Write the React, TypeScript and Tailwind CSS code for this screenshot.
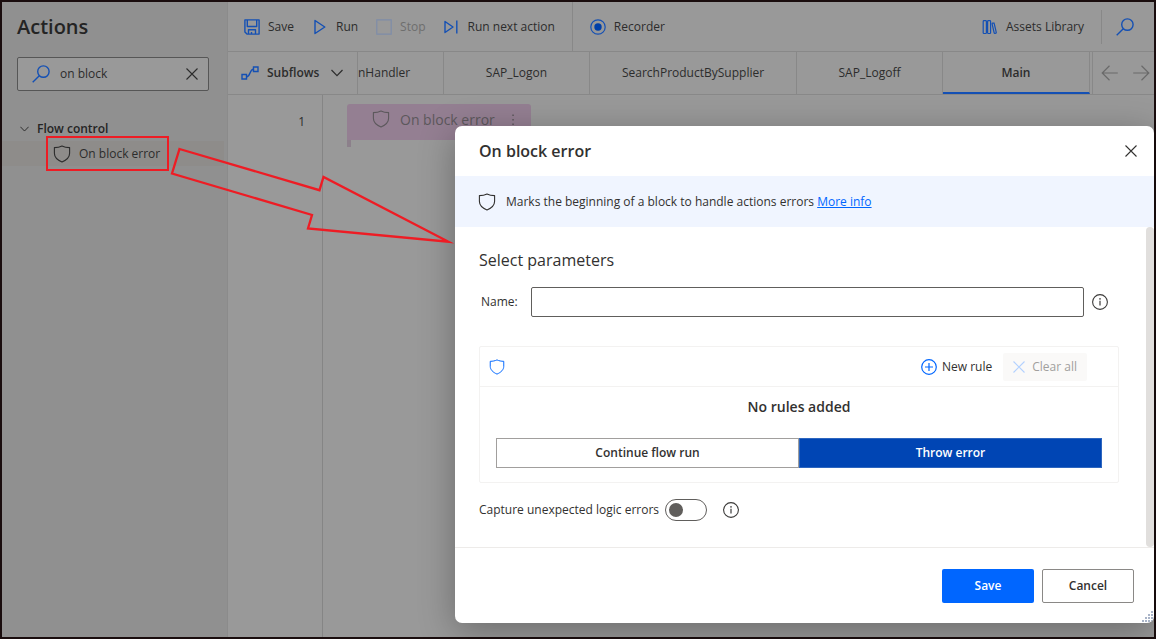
import React, { useState } from "react";

type IconProps = { className?: string };

const Shield = ({ className = "" }: IconProps) => (
  <svg viewBox="0 0 18 18" className={`shrink-0 ${className}`} fill="none" stroke="currentColor" strokeWidth="1.1" strokeLinejoin="round">
    <path d="M9 1C11.2 2.1 13.8 2.600 16.600 2.600V8.200C16.600 12 13.600 15 9 17C4.400 15 1.400 12 1.400 8.200V2.600C4.200 2.600 6.800 2.100 9 1Z" />
  </svg>
);

const Search = ({ className = "" }: IconProps) => (
  <svg viewBox="0 0 18 18" className={`shrink-0 ${className}`} fill="none" stroke="currentColor" strokeWidth="1.400">
    <circle cx="11.400" cy="6.600" r="5.700" />
    <path d="M7.300 10.700L0.700 17.300" />
  </svg>
);

const Cross = ({ className = "" }: IconProps) => (
  <svg viewBox="0 0 12 12" className={`shrink-0 ${className}`} fill="none" stroke="currentColor" strokeWidth="1.100">
    <path d="M0.500 0.500L11.500 11.500M11.500 0.500L0.500 11.500" />
  </svg>
);

const Chevron = ({ className = "" }: IconProps) => (
  <svg viewBox="0 0 12 8" className={`shrink-0 ${className}`} fill="none" stroke="currentColor" strokeWidth="1.200">
    <path d="M0.500 1L6 6.700L11.500 1" />
  </svg>
);

const Info = () => (
  <svg viewBox="0 0 16 16" className="size-4 shrink-0 text-[#3b3a39]" fill="none" stroke="currentColor">
    <circle cx="8" cy="8" r="7.400" strokeWidth="1.100" />
    <path d="M8 6.800V11.600" strokeWidth="1.200" />
    <circle cx="8" cy="4.900" r="0.800" fill="currentColor" stroke="none" />
  </svg>
);

const SaveIcon = () => (
  <svg viewBox="0 0 16 16" className="size-4 shrink-0" fill="none" stroke="currentColor" strokeWidth="1.400" strokeLinejoin="round">
    <path d="M0.900 0.900H15.100V15.100H3L0.900 13Z" />
    <path d="M3.300 1V7.500H12.700V1" />
    <path d="M4.500 15V10.700H11.500V15M7.500 15V13" />
  </svg>
);

const Play = () => (
  <svg viewBox="0 0 12 16" className="h-4 w-3 shrink-0" fill="none" stroke="currentColor" strokeWidth="1.400" strokeLinejoin="round">
    <path d="M1 1.500L10.800 8L1 14.500Z" />
  </svg>
);

const Stop = () => (
  <svg viewBox="0 0 16 16" className="size-4 shrink-0" fill="none" stroke="currentColor" strokeWidth="1.200">
    <path d="M0.800 0.800H15.200V15.200H0.800Z" />
  </svg>
);

const Next = () => (
  <svg viewBox="0 0 14 16" className="h-4 w-3.5 shrink-0" fill="none" stroke="currentColor" strokeWidth="1.400" strokeLinejoin="round">
    <path d="M1 2.500L9 8L1 13.500Z" />
    <path d="M12.800 1.500V14.500" />
  </svg>
);

const Record = () => (
  <svg viewBox="0 0 16 16" className="size-4 shrink-0" fill="none" stroke="currentColor" strokeWidth="1.200">
    <circle cx="8" cy="8" r="7.200" />
    <circle cx="8" cy="8" r="3.700" fill="#003fa8" stroke="none" />
  </svg>
);

const Library = () => (
  <svg viewBox="0 0 16 16" className="size-4 shrink-0" fill="none" stroke="currentColor" strokeWidth="1.200" strokeLinejoin="round">
    <rect x="1.200" y="1.700" width="3.200" height="12.800" rx="0.800" />
    <rect x="5.600" y="1.700" width="3" height="12.800" rx="0.800" />
    <path d="M10.100 4.800Q10 4.300 10.500 4.200L11.600 4Q12.100 3.900 12.200 4.400L14.300 13.600Q14.400 14.100 13.900 14.200L12.900 14.400Q12.400 14.500 12.200 14Z" />
  </svg>
);

const FlowIcon = () => (
  <svg viewBox="0 0 18 14" className="h-3.5 w-4.5 shrink-0 text-[#1450b4]" fill="none" stroke="currentColor" strokeWidth="1.400">
    <path d="M1 8.500H5.500V13H1ZM12.500 1H17V5.500H12.500Z" />
    <path d="M5.500 11C9.500 11 8.500 3.200 12.500 3.200" />
  </svg>
);

const Arrow = ({ className = "" }: IconProps) => (
  <svg viewBox="0 0 17 16" className={`h-4 w-[17px] shrink-0 ${className}`} fill="none" stroke="currentColor" strokeWidth="1.200">
    <path d="M8.500 0.800L1.200 8L8.500 15.200M1.200 8H16.800" />
  </svg>
);

const tabs = ["SAP_Logon", "SearchProductBySupplier", "SAP_Logoff"];

function Sidebar() {
  const [query, setQuery] = useState("on block");
  return (
    <aside className="w-[226px] shrink-0 border-r border-[#8b8b8b] bg-[#909090]">
      <h1 className="px-[15px] pt-[11px] text-[20px] leading-7 font-semibold text-[#242424]">Actions</h1>
      <div className="mt-4 mr-[18px] ml-[15px] flex h-[34px] items-center rounded-[2px] border border-[#565656] bg-[#999] pr-2.5 pl-3.5">
        <Search className="size-4.5 text-[#1450b4]" />
        <input
          aria-label="Search actions"
          value={query}
          onChange={(e) => setQuery(e.target.value)}
          className="min-w-0 flex-1 bg-transparent pl-2.5 text-[12px] text-[#2c2c2c] outline-none"
        />
        <button aria-label="Clear search" onClick={() => setQuery("")}>
          <Cross className="size-3 text-[#2c2c2c]" />
        </button>
      </div>
      <button className="mt-7 flex h-5 items-center gap-2 pl-[18px] text-[12px] font-semibold text-[#242424]">
        <Chevron className="h-1.5 w-[9px]" />
        Flow control
      </button>
      <div className="relative mt-0.5 mr-[3px] bg-[#8e8c8a]">
        <button className="flex h-[25px] items-center gap-2 pl-[51px] text-[12px] text-[#2c2c2c]">
          <Shield className="size-4.5" />
          On block error
        </button>
        <span className="pointer-events-none absolute -top-[5px] left-11 h-[35px] w-[123px] border-2 border-[#ee1c24]" />
      </div>
    </aside>
  );
}

function Toolbar() {
  const item = "flex items-center text-[12px] text-[#2c2c2c]";
  return (
    <div className="flex h-[50px] items-center border-b border-[#888]">
      <div className="flex h-full items-center border-r border-[#888] pr-[17px] pl-4">
        <button className={item}><span className="pr-2 text-[#1450b4]"><SaveIcon /></span>Save</button>
        <button className={`${item} ml-5`}><span className="pr-2.5 text-[#1450b4]"><Play /></span>Run</button>
        <button disabled className="ml-[18px] flex items-center text-[12px] text-[#6e6e6e]"><span className="pr-2 text-[#7e8ca8]"><Stop /></span>Stop</button>
        <button className={`${item} ml-[18px]`}><span className="pr-2.5 text-[#1450b4]"><Next /></span>Run next action</button>
      </div>
      <button className="flex items-center pl-[17px] text-[12px] text-[#2c2c2c]"><span className="pr-2 text-[#1450b4]"><Record /></span>Recorder</button>
      <button className="ml-auto flex items-center pr-[17px] text-[12px] text-[#2c2c2c]"><span className="pr-2 text-[#1450b4]"><Library /></span>Assets Library</button>
      <div className="flex h-[34px] items-center border-l border-[#888] pr-5 pl-3.5">
        <button aria-label="Search" className="text-[#1450b4]"><Search className="size-4.5" /></button>
      </div>
    </div>
  );
}

function TabBar() {
  return (
    <nav className="flex h-[43px] border-b border-[#888] text-[12px] text-[#2c2c2c]">
      <button className="flex w-[130px] shrink-0 items-center border-r border-[#888] pl-[13px] font-semibold">
        <FlowIcon />
        <span className="flex-1 pl-2 text-left">Subflows</span>
        <Chevron className="mr-3.5 h-2 w-3" />
      </button>
      <div className="flex min-w-0 flex-1 overflow-hidden">
        <button className="w-[86px] border-r border-[#888] text-left">nHandler</button>
        {tabs.map((t) => (
          <button key={t} className="min-w-[146px] grow border-r border-[#888] px-8">{t}</button>
        ))}
        <button className="min-w-[147px] border-r border-b-2 border-r-[#888] border-b-[#1450b4] px-8 pt-0.5 font-semibold">Main</button>
      </div>
      <div className="ml-0.5 flex items-center gap-[15px] border-l border-[#888] pr-1 pl-2 text-[#6a6a6a]">
        <button aria-label="Previous tab"><Arrow /></button>
        <button aria-label="Next tab"><Arrow className="rotate-180" /></button>
      </div>
    </nav>
  );
}

function Canvas() {
  return (
    <div className="flex flex-1">
      <div className="w-[95px] border-r border-[#858585] pt-[17px] pr-[17px] text-right text-[12px] leading-5 text-[#2c2c2c]">1</div>
      <div className="pt-[9px] pl-6">
        <div className="flex h-9 w-[184px] items-start rounded-t-[3px] bg-[#947f92] pt-1.5 pl-[25px] text-[#5c585c]">
          <Shield className="size-4.5" />
          <span className="pl-2.5 text-[14px] leading-5 font-medium">On block error</span>
          <svg viewBox="0 0 4 12" className="mt-1 mr-4 ml-auto h-3 w-1" fill="currentColor">
            <path d="M1.300 0.500h1.500v1.500h-1.500zM1.300 5h1.500v1.500h-1.500zM1.300 9.500h1.500v1.500h-1.500z" />
          </svg>
        </div>
        <div className="h-[7px] w-1 bg-[#8c808b]" />
      </div>
    </div>
  );
}

function ErrorDialog() {
  const [mode, setMode] = useState("throw");
  const segment = "flex-1 border text-[12px] font-semibold";
  return (
    <section
      role="dialog"
      aria-labelledby="dialog-title"
      className="absolute top-[124px] right-0 left-[453px] overflow-hidden rounded-[7px] bg-white text-[12px] text-[#323130] shadow-[0_8px_36px_rgba(0,0,0,0.3)]"
    >
      <header className="flex h-[50px] items-center justify-between pr-[17px] pl-6">
        <h2 id="dialog-title" className="text-[16px] font-semibold">On block error</h2>
        <button aria-label="Close"><Cross className="size-3" /></button>
      </header>
      <div className="flex h-[51px] items-center gap-2.5 bg-[#f0f5ff] pl-[23px]">
        <Shield className="size-4.5" />
        <p>
          Marks the beginning of a block to handle actions errors{" "}
          <a href="#more" className="text-[#0066ff] underline">More info</a>
        </p>
      </div>
      <div className="flex">
        <div className="min-w-0 flex-1 pt-[19px] pr-[27px] pb-[26px] pl-6">
          <h3 className="text-[16px] leading-7">Select parameters</h3>
          <div className="mt-[13px] flex items-center pr-[11px] pl-0.5">
            <label htmlFor="block-name" className="w-[50px]">Name:</label>
            <input id="block-name" className="mr-2 h-[30px] min-w-0 flex-1 rounded-[2px] border border-[#605e5c] px-2" />
            <Info />
          </div>
          <div className="mt-[29px] rounded-[2px] border border-[#f3f2f1]">
            <div className="flex h-10 items-center border-b border-[#f3f2f1] pr-[31px] pl-[9px]">
              <Shield className="size-4 text-[#0066ff]" />
              <button className="ml-auto flex items-center gap-[5px]">
                <svg viewBox="0 0 16 16" className="size-4 text-[#0066ff]" fill="none" stroke="currentColor" strokeWidth="1.200">
                  <circle cx="8" cy="8" r="7.300" />
                  <path d="M8 4V12M4 8H12" />
                </svg>
                New rule
              </button>
              <button disabled className="ml-[11px] flex h-7 items-center gap-[7px] rounded-[2px] bg-[#faf9f8] px-2.5 text-[#a19f9d]">
                <Cross className="size-3 text-[#b3d1ff]" />
                Clear all
              </button>
            </div>
            <p className="pt-2 text-center text-[14px] leading-6 font-semibold">No rules added</p>
            <div className="mx-4 mt-[19px] mb-3.5 flex h-[30px]">
              <button
                onClick={() => setMode("continue")}
                className={`${segment} ${mode === "continue" ? "border-[#2d66bf] bg-[#0045b4] text-white" : "border-[#a19f9d] bg-white"}`}
              >
                Continue flow run
              </button>
              <button
                onClick={() => setMode("throw")}
                className={`${segment} ${mode === "throw" ? "border-[#2d66bf] bg-[#0045b4] text-white" : "border-[#a19f9d] bg-white"}`}
              >
                Throw error
              </button>
            </div>
          </div>
          <div className="mt-4 flex items-center">
            <label htmlFor="capture" className="pr-1.5">Capture unexpected logic errors</label>
            <input
              id="capture"
              type="checkbox"
              role="switch"
              className="mr-4 flex h-[22px] w-[42px] appearance-none items-center rounded-full border border-[#605e5c] px-[3px] before:size-3.5 before:rounded-full before:bg-[#605e5c] checked:justify-end"
            />
            <Info />
          </div>
        </div>
        <div className="w-2 rounded-full bg-[#e1dfdd]" />
      </div>
      <footer className="relative flex justify-end gap-2 border-t border-[#edebe9] pt-[21px] pr-5 pb-5 font-semibold">
        <button className="h-[34px] w-[92px] rounded-[2px] bg-[#0066ff] text-white">Save</button>
        <button className="h-[34px] w-[92px] rounded-[2px] border border-[#8a8886]">Cancel</button>
        <svg viewBox="0 0 12 12" className="pointer-events-none absolute right-0 bottom-0 size-3" fill="#a9b4c8">
          <path d="M9 0h2v2h-2zM6 3h2v2h-2zM9 3h2v2h-2zM3 6h2v2h-2zM6 6h2v2h-2zM9 6h2v2h-2zM0 9h2v2h-2zM3 9h2v2h-2zM6 9h2v2h-2zM9 9h2v2h-2z" />
        </svg>
      </footer>
    </section>
  );
}

export default function App() {
  return (
    <div className="relative flex min-h-screen border-2 border-[#1a0d0e] bg-[#999] font-['Open_Sans','Noto_Sans',sans-serif]">
      <Sidebar />
      <main className="flex min-w-0 flex-1 flex-col">
        <Toolbar />
        <TabBar />
        <Canvas />
      </main>
      <ErrorDialog />
      <svg viewBox="0 0 290 110" className="pointer-events-none absolute top-[138px] left-[165px] h-[110px] w-[290px]" fill="none" stroke="#ee1c24" strokeWidth="2.300" strokeMiterlimit="8">
        <path d="M12.500 9L152.500 50.200L156.500 37L281.500 101.700L141 88.500L145 75L5 33.500Z" />
      </svg>
    </div>
  );
}
